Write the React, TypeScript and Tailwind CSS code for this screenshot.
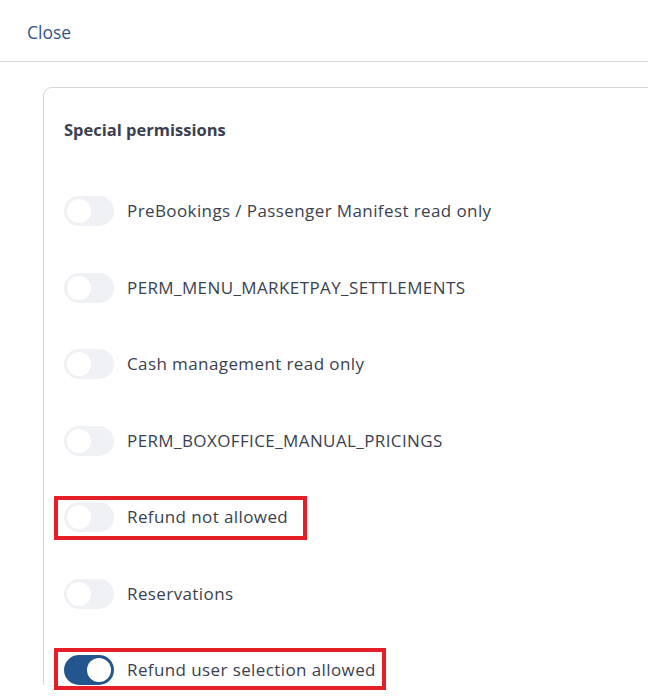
type Permission = {
  label: string;
  enabled?: boolean;
  highlight?: string;
};

const permissions: Permission[] = [
  { label: "PreBookings / Passenger Manifest read only" },
  { label: "PERM_MENU_MARKETPAY_SETTLEMENTS" },
  { label: "Cash management read only" },
  { label: "PERM_BOXOFFICE_MANUAL_PRICINGS" },
  { label: "Refund not allowed", highlight: "top-[-6px] h-[44px] w-[253px]" },
  { label: "Reservations" },
  { label: "Refund user selection allowed", enabled: true, highlight: "top-[-7px] h-[42px] w-[332px]" },
];

function Toggle({ enabled }: { enabled?: boolean }) {
  return (
    <span
      className={`flex h-[30px] w-[50px] shrink-0 items-center rounded-full px-[3px] ${
        enabled ? "justify-end bg-[#23558f]" : "justify-start bg-[#f0f1f5]"
      }`}
    >
      <span className="h-[24px] w-[24px] rounded-full bg-white" />
    </span>
  );
}

export default function App() {
  return (
    <div className="h-[698px] w-[648px] overflow-hidden bg-white font-['Open_Sans',sans-serif] text-[#3a3f51]">
      <header className="flex h-[62px] items-center border-b border-[#d9dadf] pl-[27px] pt-[3px]">
        <button className="text-[17.5px] text-[#34558b]">Close</button>
      </header>

      <div className="ml-[43px] mt-[25px] rounded-tl-[9px] border-l border-t border-[#d6d7dc] pl-[20px] pt-[29px]">
        <h2 className="text-[16.5px] font-bold leading-[26px]">Special permissions</h2>

        <ul className="mt-[53px] flex flex-col gap-[46.5px]">
          {permissions.map((p) => (
            <li key={p.label} className="relative flex h-[30px] items-center gap-[13px]">
              <Toggle enabled={p.enabled} />
              <span className="whitespace-nowrap text-[17px] tracking-[0.4px]">{p.label}</span>
              {p.highlight && (
                <span className={`absolute left-[-10px] border-[4px] border-[#e61e28] ${p.highlight}`} />
              )}
            </li>
          ))}
        </ul>
      </div>
    </div>
  );
}
